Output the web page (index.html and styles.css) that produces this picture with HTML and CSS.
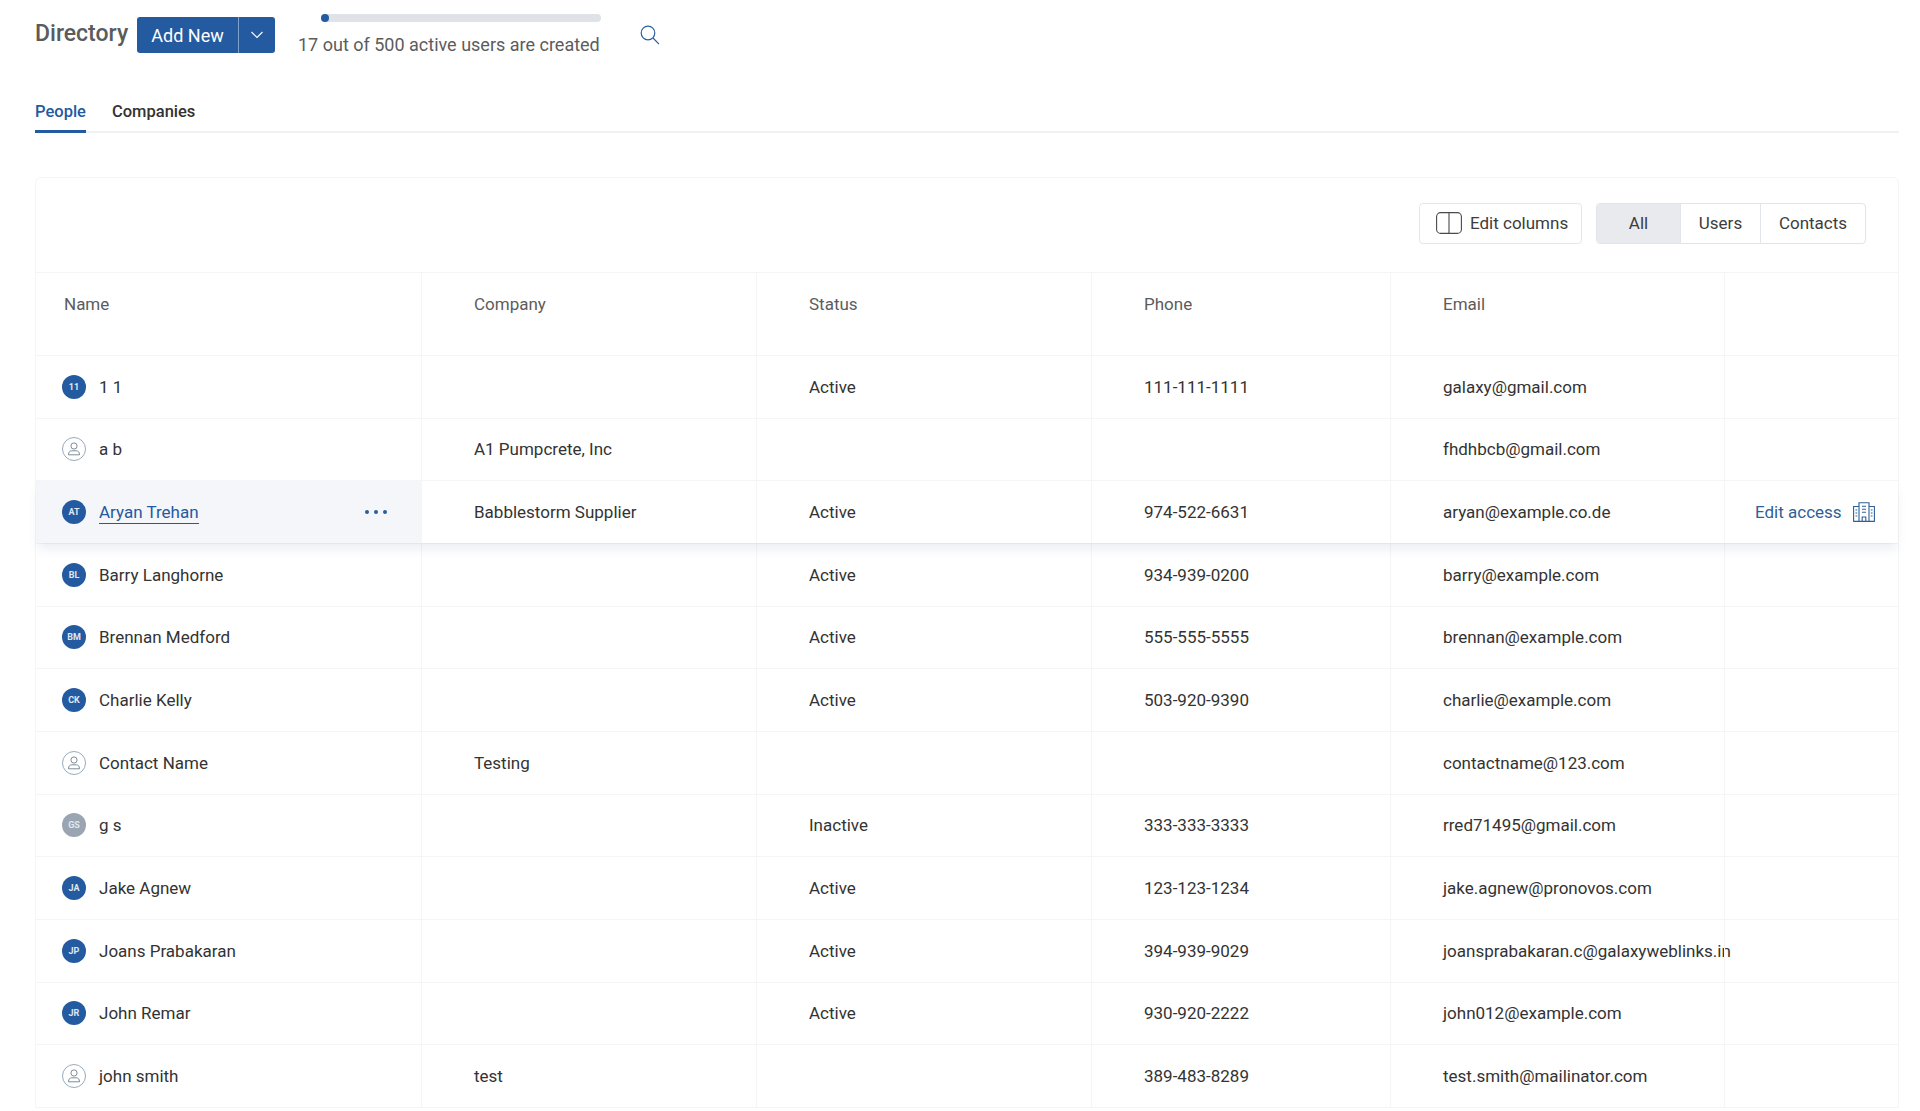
FILE: index.html
```html
<!DOCTYPE html>
<html lang="en">
<head>
<meta charset="utf-8">
<title>Directory</title>
<link rel="stylesheet" href="styles.css">
</head>
<body>
<svg class="defs" width="0" height="0" aria-hidden="true">
  <symbol id="person" viewBox="0 0 24 24">
    <circle cx="12" cy="12" r="11.5" fill="none" stroke="#7d94a8" stroke-width=".8"/>
    <circle cx="12" cy="9" r="3.1" fill="none" stroke="#6f7f8e" stroke-width=".9"/>
    <path d="M6.5 17.8c0-3 1.6-4 3.2-4h4.6c1.600 0 3.200 1 3.200 4z" fill="none" stroke="#6f7f8e" stroke-width=".9" stroke-linejoin="round"/>
  </symbol>
</svg>
<main class="page">
  <header class="topbar">
    <h1 class="title">Directory</h1>
    <div class="split-btn">
      <span class="split-main">Add New</span>
      <span class="split-caret">
        <svg width="14" height="8" viewBox="0 0 14 8"><path d="M1.500 1l5.500 5.500L12.500 1" fill="none" stroke="#fff" stroke-width="1.100"/></svg>
      </span>
    </div>
    <div class="quota">
      <div class="quota-track"><div class="quota-fill"></div></div>
      <div class="quota-text">17 out of 500 active users are created</div>
    </div>
    <svg class="search" width="20" height="20" viewBox="0 0 20 20"><circle cx="8" cy="8" r="6.800" fill="none" stroke="#2a5f9e" stroke-width="1.200"/><path d="M13 13l6 6.200" stroke="#2a5f9e" stroke-width="1.200" fill="none"/></svg>
  </header>

  <nav class="tabs">
    <span class="tab tab-active">People</span>
    <span class="tab">Companies</span>
  </nav>

  <section class="card">
    <div class="toolbar">
      <div class="edit-columns">
        <svg width="26" height="22" viewBox="0 0 26 22"><rect x=".6" y=".6" width="24.800" height="20.800" rx="4" fill="none" stroke="#4a4a4a" stroke-width="1.100"/><path d="M13 .6v20.800" stroke="#4a4a4a" stroke-width="1.100"/></svg>
        <span>Edit columns</span>
      </div>
      <div class="segments">
        <span class="seg seg-all seg-on">All</span>
        <span class="seg seg-users">Users</span>
        <span class="seg seg-contacts">Contacts</span>
      </div>
    </div>

    <div class="row row-head">
      <div class="cell cell-name">Name</div>
      <div class="cell">Company</div>
      <div class="cell">Status</div>
      <div class="cell">Phone</div>
      <div class="cell">Email</div>
      <div class="cell cell-last"></div>
    </div>

    <div class="row">
      <div class="cell cell-name"><span class="avatar">11</span><span>1 1</span></div>
      <div class="cell"></div><div class="cell">Active</div><div class="cell">111-111-1111</div><div class="cell">galaxy@gmail.com</div><div class="cell cell-last"></div>
    </div>
    <div class="row">
      <div class="cell cell-name"><svg class="avatar-svg"><use href="#person"/></svg><span>a b</span></div>
      <div class="cell">A1 Pumpcrete, Inc</div><div class="cell"></div><div class="cell"></div><div class="cell">fhdhbcb@gmail.com</div><div class="cell cell-last"></div>
    </div>
    <div class="row row-hover">
      <div class="cell cell-name cell-hover"><span class="avatar">AT</span><span class="link">Aryan Trehan</span>
        <span class="dots"><i></i><i></i><i></i></span>
      </div>
      <div class="cell">Babblestorm Supplier</div><div class="cell">Active</div><div class="cell">974-522-6631</div><div class="cell">aryan@example.co.de</div>
      <div class="cell cell-last cell-access"><span class="access">Edit access</span>
        <svg width="22" height="20" viewBox="0 0 22 20" fill="none" stroke="#2f5f97" stroke-width="1.100"><path d="M.6 19.400V4.500h5.400M21.400 19.400V4.500H16M6 19.400V.8h10v18.600M.2 19.400h21.600M9.200 19.400v-4.400h3.600v4.400M9 4.200h4M9 7.200h4M9 10.200h4M2.500 8h1.700M2.500 11h1.700M2.500 14h1.700M17.800 8h1.700M17.800 11h1.700M17.800 14h1.700"/></svg>
      </div>
    </div>
    <div class="row">
      <div class="cell cell-name"><span class="avatar">BL</span><span>Barry Langhorne</span></div>
      <div class="cell"></div><div class="cell">Active</div><div class="cell">934-939-0200</div><div class="cell">barry@example.com</div><div class="cell cell-last"></div>
    </div>
    <div class="row">
      <div class="cell cell-name"><span class="avatar">BM</span><span>Brennan Medford</span></div>
      <div class="cell"></div><div class="cell">Active</div><div class="cell">555-555-5555</div><div class="cell">brennan@example.com</div><div class="cell cell-last"></div>
    </div>
    <div class="row">
      <div class="cell cell-name"><span class="avatar">CK</span><span>Charlie Kelly</span></div>
      <div class="cell"></div><div class="cell">Active</div><div class="cell">503-920-9390</div><div class="cell">charlie@example.com</div><div class="cell cell-last"></div>
    </div>
    <div class="row">
      <div class="cell cell-name"><svg class="avatar-svg"><use href="#person"/></svg><span>Contact Name</span></div>
      <div class="cell">Testing</div><div class="cell"></div><div class="cell"></div><div class="cell">contactname@123.com</div><div class="cell cell-last"></div>
    </div>
    <div class="row">
      <div class="cell cell-name"><span class="avatar avatar-off">GS</span><span>g s</span></div>
      <div class="cell"></div><div class="cell">Inactive</div><div class="cell">333-333-3333</div><div class="cell">rred71495@gmail.com</div><div class="cell cell-last"></div>
    </div>
    <div class="row">
      <div class="cell cell-name"><span class="avatar">JA</span><span>Jake Agnew</span></div>
      <div class="cell"></div><div class="cell">Active</div><div class="cell">123-123-1234</div><div class="cell">jake.agnew@pronovos.com</div><div class="cell cell-last"></div>
    </div>
    <div class="row">
      <div class="cell cell-name"><span class="avatar">JP</span><span>Joans Prabakaran</span></div>
      <div class="cell"></div><div class="cell">Active</div><div class="cell">394-939-9029</div><div class="cell">joansprabakaran.c@galaxyweblinks.in</div><div class="cell cell-last"></div>
    </div>
    <div class="row">
      <div class="cell cell-name"><span class="avatar">JR</span><span>John Remar</span></div>
      <div class="cell"></div><div class="cell">Active</div><div class="cell">930-920-2222</div><div class="cell">john012@example.com</div><div class="cell cell-last"></div>
    </div>
    <div class="row">
      <div class="cell cell-name"><svg class="avatar-svg"><use href="#person"/></svg><span>john smith</span></div>
      <div class="cell">test</div><div class="cell"></div><div class="cell">389-483-8289</div><div class="cell">test.smith@mailinator.com</div><div class="cell cell-last"></div>
    </div>
  </section>
</main>
</body>
</html>
```
FILE: styles.css
```css
* { box-sizing: border-box; }
html, body { margin: 0; height: 100%; background: #fff; }
body {
  overflow: hidden;
  height: 1111px;
  font-family: Roboto, "Liberation Sans", sans-serif;
  font-size: 17px;
  color: #333;
}
.defs { display: block; height: 0; }
.page { padding: 0 21px 0 35px; }

.topbar { display: flex; align-items: flex-start; height: 90px; }
.title {
  margin: 21px 0 0;
  width: 102px;
  font-size: 23px;
  line-height: 26px;
  font-weight: 500;
  color: #5b5b5b;
}
.split-btn {
  display: flex;
  width: 138px;
  height: 36px;
  margin-top: 17px;
  border-radius: 3px;
  background: #245a9f;
  color: #fff;
  font-size: 18px;
  font-weight: 400;
}
.split-main {
  width: 102px;
  display: flex;
  align-items: center;
  justify-content: center;
  border-right: 1px solid #7fa2cc;
}
.split-caret { flex: 1; display: flex; align-items: center; justify-content: center; }
.quota { width: 303px; margin-left: 23px; padding-top: 14px; }
.quota-track { margin-left: 23px; height: 8px; border-radius: 4px; background: #dfe2e6; }
.quota-fill { width: 8px; height: 8px; border-radius: 50%; background: #245a9f; }
.quota-text { margin-top: 12px; font-size: 18px; line-height: 22px; color: #5c5c5c; white-space: nowrap; }
.search { margin: 25px 0 0 39px; }

.tabs {
  display: flex;
  gap: 26px;
  height: 43px;
  border-bottom: 2px solid #f0f1f3;
  font-size: 16.500px;
  font-weight: 500;
}
.tab { height: 43px; line-height: 43px; color: #333; }
.tab-active { color: #245a9f; border-bottom: 3px solid #245a9f; }

.card {
  margin-top: 44px;
  border: 1px solid #f4f5f6;
  border-radius: 6px 6px 0 0;
}
.toolbar {
  display: flex;
  justify-content: flex-end;
  align-items: center;
  gap: 14px;
  height: 94px;
  padding: 0 32px 4px 0;
}
.edit-columns {
  display: flex;
  align-items: center;
  gap: 8px;
  width: 163px;
  height: 41px;
  padding-left: 16px;
  border: 1px solid #e4e7ea;
  border-radius: 4px;
  font-size: 17px;
  color: #3d3d3d;
}
.segments {
  display: flex;
  height: 41px;
  border: 1px solid #e1e4e8;
  border-radius: 4px;
  overflow: hidden;
}
.seg { display: flex; align-items: center; justify-content: center; font-size: 17px; color: #3d3d3d; }
.seg-all { width: 83px; }
.seg-users { width: 80px; border-left: 1px solid #e1e4e8; }
.seg-contacts { width: 105px; border-left: 1px solid #e1e4e8; }
.seg-on { background: #e8eaed; }

.row {
  display: grid;
  grid-template-columns: 385px 335px 335px 299px 334px 174px;
  height: 62.670px;
  border-top: 1px solid #f4f5f6;
  position: relative;
}
.row-head { height: 83px; color: #5c5c5c; }
.row-head .cell { align-items: flex-start; padding-top: 21px; }
.row-head .cell-name { padding-left: 28px; }
.cell {
  display: flex;
  align-items: center;
  padding-left: 52px;
  border-left: 1px solid #f4f5f6;
  white-space: nowrap;
  min-width: 0;
}
.cell-name { padding-left: 26px; border-left: 0; gap: 13px; position: relative; }
.cell-last { padding-left: 30px; }

.avatar {
  width: 24px;
  height: 24px;
  flex: none;
  display: flex;
  align-items: center;
  justify-content: center;
  border-radius: 50%;
  background: #245a9f;
  color: #dfe8f3;
  font-size: 9px;
  font-weight: 700;
}
.avatar-off { background: #9aa5b1; }
.avatar-svg { width: 24px; height: 24px; flex: none; }

.row-hover { box-shadow: 0 8px 10px -2px rgba(60, 90, 140, .1); z-index: 1; background: #fff; }
.cell-hover { background: #f4f6f9; }
.link { color: #245a9f; border-bottom: 1px solid #245a9f; line-height: 22px; }
.dots { position: absolute; left: 329px; top: 50%; display: flex; gap: 5px; margin-top: -2px; }
.dots i { width: 4px; height: 4px; border-radius: 50%; background: #2a5f9e; }
.cell-access { gap: 11px; }
.access { color: #2f5f97; }
```
